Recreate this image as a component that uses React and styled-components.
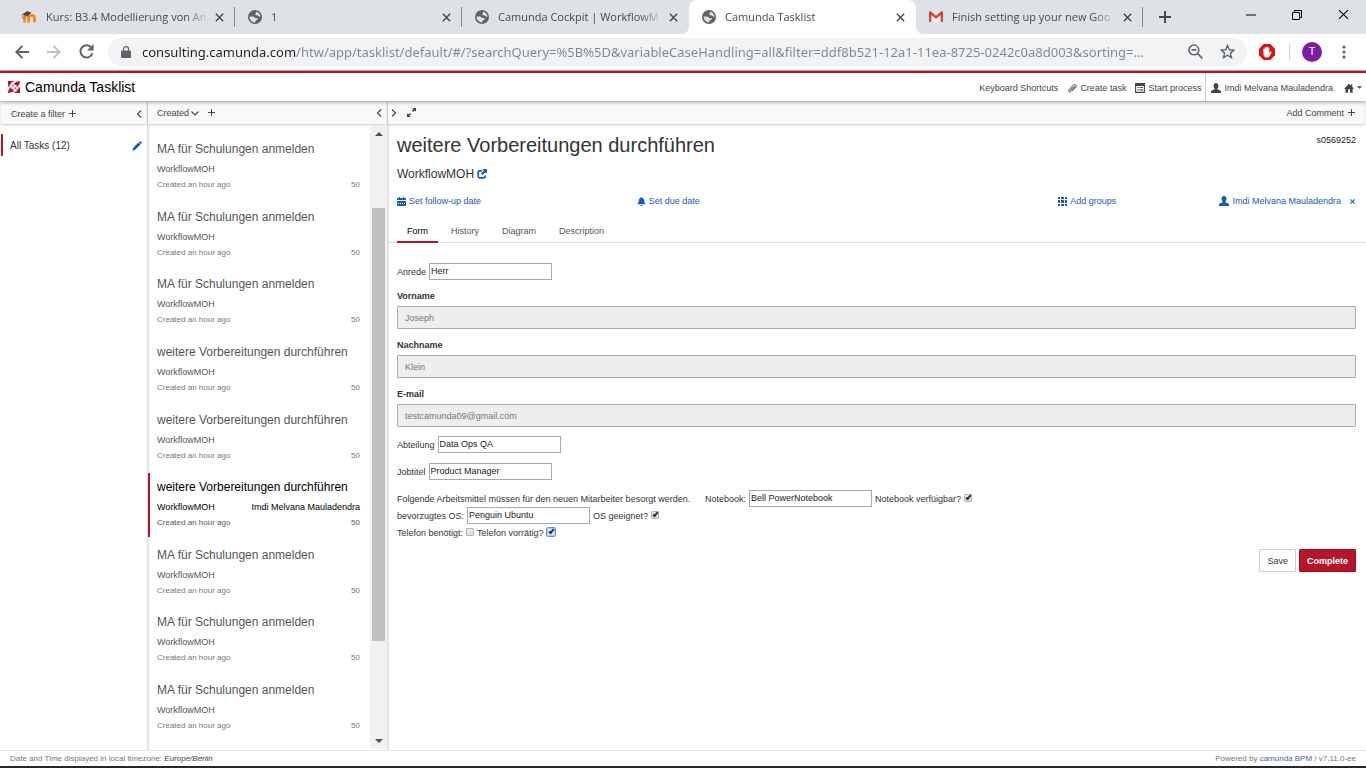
import React from "react";
import styled, { createGlobalStyle, css } from "styled-components";

const RED = "#b5152b";
const BLUE = "#155cb5";

const GlobalStyle = createGlobalStyle`
  *, *::before, *::after { box-sizing: border-box; }
  html, body, #root { height: 100%; }
  body {
    margin: 0;
    background: #fff;
    color: #333;
    font-family: "Liberation Sans", Arial, sans-serif;
    font-size: 9px;
    line-height: 14px;
  }
  h1, h2, h3, p, ul { margin: 0; padding: 0; font-weight: 400; }
  ul { list-style: none; }
  a { color: inherit; text-decoration: none; }
  button, input { font: inherit; color: inherit; }
  button { margin: 0; padding: 0; border: 0; background: none; cursor: pointer; }
`;

const Page = styled.div`
  display: flex;
  flex-direction: column;
  height: 100vh;
  overflow: hidden;
  border-bottom: 2px solid #27272b;
`;

const Svg = styled.svg`
  display: block;
  flex: none;
  fill: currentColor;
`;

const StrokeSvg = styled(Svg)`
  fill: none;
  stroke: currentColor;
  stroke-width: ${(p) => p.$stroke};
`;

/* ---------- browser frame ---------- */

const TabStrip = styled.div`
  display: flex;
  flex: none;
  height: 34px;
  padding-left: 8px;
  background: #dee1e6;
  color: #45494d;
  font-family: "Open Sans", sans-serif;
  font-size: 11px;
  line-height: 18px;
`;

const BrowserTab = styled.div`
  position: relative;
  display: flex;
  flex: 0 1 227px;
  min-width: 0;
  align-items: center;
  gap: 9px;
  padding: 0 8px 0 13px;
  ${(p) =>
    p.$active
      ? css`
          background: #fff;
          border-radius: 8px 8px 0 0;
          &::before,
          &::after {
            content: "";
            position: absolute;
            bottom: 0;
            width: 8px;
            height: 8px;
          }
          &::before {
            right: 100%;
            background: radial-gradient(circle at 0 0, transparent 8px, #fff 8px);
          }
          &::after {
            left: 100%;
            background: radial-gradient(circle at 100% 0, transparent 8px, #fff 8px);
          }
        `
      : null}
  ${(p) =>
    p.$divided
      ? css`
          &::after {
            content: "";
            position: absolute;
            right: 0;
            top: 7px;
            width: 1px;
            height: 20px;
            background: #868b90;
          }
        `
      : null}
`;

const TabTitle = styled.span`
  flex: 1;
  min-width: 0;
  margin-right: -7px;
  overflow: hidden;
  white-space: nowrap;
  mask-image: linear-gradient(to right, #000 calc(100% - 24px), transparent);
`;

const IconButton = styled.button`
  display: flex;
  flex: none;
  align-items: center;
  justify-content: center;
  width: ${(p) => p.$w || 16}px;
  height: ${(p) => p.$h || 16}px;
  &:disabled {
    color: #bdc0c4;
  }
`;

const WindowButtons = styled.div`
  display: flex;
  margin-left: auto;
  color: #000;
`;

const Toolbar = styled.div`
  display: flex;
  flex: none;
  align-items: center;
  height: 37px;
  padding: 0 12px 1px 12px;
  border-bottom: 1px solid #b5b6b8;
  color: #5f6368;
`;

const NavButtons = styled.div`
  display: flex;
  gap: 12px;
  margin-right: 12px;
`;

const AddressBar = styled.div`
  display: flex;
  flex: 1;
  align-items: center;
  height: 28px;
  padding: 0 8px 0 13px;
  border-radius: 14px;
  background: #f1f3f4;
`;

const AddressInput = styled.input`
  flex: 1;
  min-width: 0;
  height: 24px;
  margin: 0 2px 0 11px;
  padding: 0;
  border: 0;
  outline: 0;
  background: linear-gradient(to right, #202124 154px, #80868b 154px);
  background-clip: text;
  color: transparent;
  font-family: "Noto Sans", "Open Sans", sans-serif;
  font-size: 13px;
  text-overflow: ellipsis;
`;

const ToolbarExtras = styled.div`
  display: flex;
  align-items: center;
  margin-left: 12px;
`;

const ToolbarRule = styled.span`
  width: 1px;
  height: 16px;
  margin: 0 12px 0 14px;
  background: #cfd1d4;
`;

const Avatar = styled.button`
  width: 20px;
  height: 20px;
  margin-right: 12px;
  border-radius: 50%;
  background: #7b1fa2;
  color: #fff;
  font-family: Roboto, sans-serif;
  font-size: 11px;
`;

/* ---------- application header ---------- */

const AppHeader = styled.header`
  position: relative;
  z-index: 2;
  display: flex;
  flex: none;
  align-items: stretch;
  height: 30px;
  padding: 0 4px 0 8px;
  border-top: 2px solid ${RED};
  background: #fff;
  box-shadow: 0 1px 4px rgba(0, 0, 0, 0.4);
`;

const Brand = styled.a`
  display: flex;
  align-items: center;
  gap: 5px;
  color: #000;
  font-size: 14px;
`;

const HeaderNav = styled.nav`
  display: flex;
  gap: 9px;
  margin-left: auto;
  color: #444;
`;

const HeaderLink = styled.button`
  display: flex;
  align-items: center;
  gap: 3px;
  padding-top: 1px;
  white-space: nowrap;
`;

const HeaderUser = styled.div`
  display: flex;
  gap: 11px;
  margin-left: -5px;
  padding-left: 5px;
  border-left: 1px solid #ccc;
`;

/* ---------- columns ---------- */

const Columns = styled.main`
  display: flex;
  flex: 1;
  min-height: 0;
`;

const Column = styled.section`
  display: flex;
  flex-direction: column;
  flex: ${(p) => p.$flex};
  min-width: 0;
  ${(p) => (p.$edge ? "box-shadow: inset 4px 0 3px -3px rgba(0, 0, 0, 0.2);" : "")}
`;

const ColumnBar = styled.div`
  display: flex;
  flex: none;
  align-items: center;
  height: 23px;
  margin: 0 1px 1px;
  padding: ${(p) => p.$pad};
  background: #f9f9f9;
  color: #444;
  box-shadow: 0 1px 2px rgba(0, 0, 0, 0.22);
`;

const BarButton = styled.button`
  display: flex;
  align-items: center;
  gap: ${(p) => p.$gap || 4}px;
`;

const BarGroup = styled.div`
  display: flex;
  align-items: center;
  gap: 9px;
`;

const Spacer = styled.span`
  flex: 1;
`;

const FilterItem = styled.div`
  display: flex;
  align-items: center;
  justify-content: space-between;
  height: 22px;
  margin: 9px 5px 0 1px;
  padding: 1px 0 0 7px;
  border-left: 2px solid ${RED};
  font-size: 10px;
`;

const FilterEdit = styled(IconButton)`
  color: ${BLUE};
`;

const ListArea = styled.div`
  display: flex;
  flex: 1;
  min-height: 0;
  margin-left: 1px;
`;

const TaskList = styled.ul`
  display: flex;
  flex: 1;
  flex-direction: column;
  justify-content: space-between;
  padding: 10px 0;
`;

const TaskItem = styled.li`
  display: flex;
  flex-direction: column;
  height: 64px;
  padding: 7px 10px 8px 7px;
  border-left: 2px solid ${(p) => (p.$selected ? RED : "transparent")};
  color: ${(p) => (p.$selected ? "#000" : "#555")};
`;

const TaskTitle = styled.h3`
  font-size: 12px;
  line-height: 15px;
  margin-bottom: 5px;
  white-space: nowrap;
`;

const TaskRow = styled.div`
  display: flex;
  justify-content: space-between;
  line-height: 14px;
`;

const TaskMeta = styled(TaskRow)`
  margin-top: 2px;
  color: ${(p) => (p.$selected ? "#555" : "#777")};
  font-size: 8px;
`;

const ScrollBar = styled.div`
  display: flex;
  flex: none;
  flex-direction: column;
  width: 17px;
  margin-bottom: 1px;
  padding: 0 2px;
  background: #f1f1f1;
  color: #505050;
`;

const ScrollPart = styled.span`
  flex: ${(p) => p.$grow};
  background: ${(p) => (p.$thumb ? "#c1c1c1" : "transparent")};
`;

/* ---------- task detail ---------- */

const Detail = styled.div`
  padding: 7px 10px 0;
`;

const DetailHead = styled.div`
  display: flex;
  justify-content: space-between;
  align-items: flex-start;
  color: #333;
`;

const TenantId = styled.span`
  padding-top: 1px;
  color: #222;
`;

const DetailTitle = styled.h1`
  font-size: 20px;
  line-height: 26px;
`;

const DetailProcess = styled.h2`
  display: flex;
  align-items: center;
  gap: 3px;
  margin-top: 9px;
  font-size: 12px;
  line-height: 14px;
  a { color: ${BLUE}; }
`;

const DetailMeta = styled.div`
  display: grid;
  grid-template-columns: repeat(4, 1fr);
  margin-top: 12px;
  color: ${BLUE};
`;

const MetaCell = styled.div`
  display: flex;
  align-items: center;
  justify-content: ${(p) => (p.$end ? "flex-end" : "flex-start")};
  gap: 8px;
`;

const MetaButton = styled.button`
  display: flex;
  align-items: center;
  gap: 3px;
`;

const DetailTabs = styled.div`
  display: flex;
  gap: 3px;
  margin: 11px -10px 0;
  padding: 0 10px;
  border-bottom: 1px solid #ddd;
`;

const DetailTab = styled.button`
  height: 23px;
  margin-bottom: -1px;
  padding: 0 10px;
  border-bottom: 2px solid ${(p) => (p.$active ? RED : "transparent")};
  color: ${(p) => (p.$active ? "#000" : "#555")};
`;

const Form = styled.form`
  padding-top: 20px;
`;

const InlineRow = styled.div`
  display: flex;
  align-items: center;
  gap: 3px;
  height: 17px;
  margin-bottom: ${(p) => p.$after || 0}px;
`;

const Intro = styled.span`
  flex: 0 0 305px;
`;

const TextBox = styled.input`
  width: 123px;
  height: 17px;
  padding: 0 1px 1px;
  border: 1px solid #a9a9a9;
  border-radius: 0;
  background: #fff;
  color: #222;
`;

const Field = styled.div`
  display: flex;
  flex-direction: column;
  gap: 3px;
  margin-bottom: 9px;
  label {
    font-weight: 700;
  }
`;

const LockedBox = styled.input`
  width: 100%;
  height: 23px;
  padding: 0 7px;
  border: 1px solid #aaa;
  border-radius: 1px;
  background: #eee;
  color: #777;
`;

const Tick = styled.input`
  appearance: none;
  position: relative;
  width: 8px;
  height: 8px;
  margin: 0 0 2px;
  border: 1px solid #b4b4b4;
  border-radius: 1px;
  background: linear-gradient(#eee, #ddd);
  ${(p) => (p.$focused ? "outline: 1px solid #5a96f0; border-color: #a9c8f7; background: #dbe8fb;" : "")}
  &:checked::after {
    content: "";
    position: absolute;
    left: 2px;
    top: -1px;
    width: 3px;
    height: 6px;
    border: solid #333;
    border-width: 0 2px 2px 0;
    transform: rotate(40deg);
  }
`;

const FormButtons = styled.div`
  display: flex;
  justify-content: flex-end;
  gap: 3px;
  margin-top: 8px;
`;

const FormButton = styled.button`
  height: 23px;
  padding: 0 7px;
  border: 1px solid ${(p) => (p.$primary ? "#a01226" : "#ccc")};
  border-radius: 1px;
  background: ${(p) => (p.$primary ? RED : "#fff")};
  color: ${(p) => (p.$primary ? "#fff" : "#333")};
  font-weight: ${(p) => (p.$primary ? 700 : 400)};
`;

const Footer = styled.footer`
  display: flex;
  flex: none;
  justify-content: space-between;
  height: 16px;
  padding: 0 10px;
  border-top: 1px solid #e8e8e8;
  color: #777;
  font-size: 8px;
  line-height: 15px;
  em { color: #444; }
  a { color: #4a63ad; }
`;

/* ---------- icons ---------- */

const Icon = ({ d, size = 10, box = 16, stroke, children }) => {
  const Shape = stroke ? StrokeSvg : Svg;
  return (
    <Shape width={size} height={size} viewBox={`0 0 ${box} ${box}`} $stroke={stroke} aria-hidden="true">
      {d ? <path d={d} /> : children}
    </Shape>
  );
};

const CloseIcon = ({ size = 8, stroke = 2.6 }) => <Icon size={size} stroke={stroke} d="M1.5 1.5l13 13M14.5 1.5l-13 13" />;
const PlusIcon = ({ size = 7, stroke = 2.3 }) => <Icon size={size} stroke={stroke} d="M8 0v16M0 8h16" />;
const LeftIcon = () => <Icon size={8} stroke={2.2} d="M12 1L5 8l7 7" />;
const RightIcon = () => <Icon size={8} stroke={2.2} d="M4 1l7 7-7 7" />;
const DownIcon = () => <Icon size={8} stroke={2.2} d="M1 5l7 7 7-7" />;

const GlobeIcon = () => (
  <Icon size={14} box={14}>
    <circle cx="7" cy="7" r="7" fill="#5f6368" />
    <path
      fill="#dee1e6"
      d="M1.6 6.6h3.2c1.4 0 1.6 1.6 2.9 1.6h2.1c.3 1.5-.6 1.7-1.6 2-.8.3-.6 1.7-1.4 2.2C4 12.4 1.5 9.7 1.6 6.6zM8 1.7c2.6.4 4.4 2.5 4.4 5-.8.3-1.5-.5-2.2-1C9.6 5.2 8 5.6 7.4 4.900 6.700 4 8.600 3.300 8 1.700z"
    />
  </Icon>
);

const MoodleIcon = () => (
  <Svg width="16" height="14" viewBox="0 0 16 14" aria-hidden="true">
    <path d="M3.5 12.5V7.600c0-3 4.200-3 4.200 0v4.900M7.700 7.600c0-3 5.800-3 5.800 0v4.900" fill="none" stroke="#f98012" strokeWidth="2.6" />
    <path d="M1 4.500L6 1.200l4.500 1.300L6.500 6 1 4.500z" fill="#444" />
    <path d="M1.600 4.600v4" stroke="#777" strokeWidth=".8" />
  </Svg>
);

const GmailIcon = () => (
  <Svg width="14" height="12" viewBox="0 0 14 12" aria-hidden="true">
    <path d="M1 .5h12V11H1z" fill="#f3efee" />
    <path d="M0 1.500C0 .4 1.300 0 2 .6l5 4.200 5-4.200c.7-.6 2-.2 2 .9V11h-2.300V4L7 7.800 2.300 4v7H0z" fill="#d54336" />
  </Svg>
);

const LogoIcon = () => (
  <Svg width="12" height="12" viewBox="0 0 12 12" aria-hidden="true">
    <path
      d="M0 0h5.500v1.500a1.500 1.500 0 1 0 0 2.300v1.700H4a1.400 1.400 0 1 0-2 0H0zM6.500 6.500H8a1.400 1.400 0 1 0 2 0h2V12H6.500v-1.800a1.500 1.500 0 1 0 0-2z"
      fill={RED}
    />
    <path d="M6.200 1.700h2v2h-2zM8.600 3h1.600v2.600H8.600zM1.800 6.400h1.600v2H1.800zM3.800 8.600h2v2h-2zM10.200.2H12v1.600h-1.800zM0 10.200h1.800V12H0z" fill={RED} />
    <circle cx="9.400" cy="2.500" r="2.100" fill={RED} />
    <circle cx="2.600" cy="9.500" r="2.100" fill={RED} />
  </Svg>
);

const UserIcon = () => (
  <Icon d="M8 0c2.200 0 3.800 1.700 3.800 4.200 0 1.900-.7 3.600-1.700 4.500v1.200l4.800 2.200c.7.4 1.100 1 1.100 1.800V16H0v-2.100c0-.8.4-1.400 1.100-1.800l4.800-2.200V8.700c-1-.9-1.700-2.600-1.700-4.500C4.200 1.700 5.800 0 8 0z" />
);
const ClipIcon = () => (
  <Icon
    stroke={1.4}
    d="M5.500 11.500l6-6.200c1.200-1.100 2.600.2 1.500 1.500l-6.700 6.900c-2.400 2.100-5.400-.6-3.300-3.200l6.800-7.200c3.200-2.900 6.700.7 4.100 3.700l-5.200 5.400M4.500 12.500l6.200-6.400"
  />
);
const ListIcon = () => (
  <Icon>
    <path d="M1 1h14v14H1zM1 4h14M4 7.200h2M7.500 7.200h5M4 11h2M7.500 11h5" fill="none" stroke="currentColor" strokeWidth="1.800" />
    <path d="M0 0h16v4.500H0z" />
  </Icon>
);
const HomeIcon = () => <Icon d="M8 1L0 9h2.200v6.500h4.300V10h3v5.500h4.300V9H16l-2.700-2.700V2h-2v2.300z" />;
const CaretIcon = () => <Icon size={5} d="M0 4h16l-8 8z" />;
const PencilIcon = () => <Icon d="M12.800 0l3.200 3.200-1.800 1.800L11 1.800zM10.300 2.500l3.200 3.200-8.300 8.100L.5 15.500l1.500-4.900z" />;
const ResizeIcon = () => (
  <Icon size={9} d="M9.500 0H16v6.500l-2.200-2.200-2.800 2.800-2.100-2.100 2.800-2.800zM0 16V9.500l2.200 2.200L5 8.900 7.100 11l-2.800 2.800L6.500 16z" />
);
const ExternalIcon = () => (
  <Icon>
    <path d="M8 3H4Q2 3 2 5v7q0 2 2 2h7q2 0 2-2v-1.500" fill="none" stroke="currentColor" strokeWidth="2.800" />
    <path d="M8.500 0H16v7.500l-2.400-2.400-4.600 4.600-2.700-2.700 4.600-4.600z" />
  </Icon>
);
const CalendarIcon = () => (
  <Icon size={9} box={9} d="M0 1h2V0h1v1h3V0h1v1h2v2H0zM0 4h9v5H0zM1 6v1h1V6zM3 6v1h1V6zM5 6v1h1V6zM7 6v1h1V6z" />
);
const BellIcon = () => (
  <Icon size={9} d="M8 0c1 0 1.400.7 1.400 1.600C12 2.400 13 4.500 13 7c0 3 1 4.300 3 6H0c2-1.700 3-3 3-6 0-2.500 1-4.600 3.600-5.400C6.600.7 7 0 8 0zM6 14h4c0 2.600-4 2.600-4 0z" />
);
const GridIcon = () => (
  <Icon size={9} box={9} d="M0 0h2v2H0zM3 0h3v2H3zM7 0h2v2H7zM0 3h2v3H0zM3 3h3v3H3zM7 3h2v3H7zM0 7h2v2H0zM3 7h3v2H3zM7 7h2v2H7z" />
);

/* ---------- data ---------- */

const browserTabs = [
  { title: "Kurs: B3.4 Modellierung von An", icon: <MoodleIcon />, divided: true },
  { title: "1", icon: <GlobeIcon />, divided: true },
  { title: "Camunda Cockpit | WorkflowM", icon: <GlobeIcon /> },
  { title: "Camunda Tasklist", icon: <GlobeIcon />, active: true },
  { title: "Finish setting up your new Goo", icon: <GmailIcon />, divided: true },
];

const MA = "MA für Schulungen anmelden";
const WV = "weitere Vorbereitungen durchführen";
const tasks = [MA, MA, MA, WV, WV, WV, MA, MA, MA].map((title, i) => ({ title, selected: i === 5 }));

const locked = [
  { id: "vorname", label: "Vorname", value: "Joseph" },
  { id: "nachname", label: "Nachname", value: "Klein" },
  { id: "email", label: "E-mail", value: "testcamunda09@gmail.com" },
];

const URL_TEXT =
  "consulting.camunda.com/htw/app/tasklist/default/#/?searchQuery=%5B%5D&variableCaseHandling=all&filter=ddf8b521-12a1-11ea-8725-0242c0a8d003&sorting=...";

function InlineText({ id, label, value }) {
  return (
    <>
      <label htmlFor={id}>{label}</label>
      <TextBox id={id} defaultValue={value} />
    </>
  );
}

function InlineTick({ id, label, ...rest }) {
  return (
    <>
      <label htmlFor={id}>{label}</label>
      <Tick type="checkbox" id={id} {...rest} />
    </>
  );
}

function Browser() {
  return (
    <>
      <TabStrip>
        {browserTabs.map((t) => (
          <BrowserTab key={t.title} $active={t.active} $divided={t.divided}>
            {t.icon}
            <TabTitle>{t.title}</TabTitle>
            <IconButton aria-label="Close tab"><CloseIcon size={9} /></IconButton>
          </BrowserTab>
        ))}
        <IconButton $w={44} $h={34} aria-label="New tab"><PlusIcon size={12} stroke={2.6} /></IconButton>
        <WindowButtons>
          <IconButton $w={46} $h={29} aria-label="Minimize"><Icon size={10} stroke={1.6} d="M0 8h16" /></IconButton>
          <IconButton $w={46} $h={29} aria-label="Restore">
            <Icon size={10} box={10} stroke={1} d="M.5 2.5h7v7h-7zM2.500 2.500v-2h7v7h-2" />
          </IconButton>
          <IconButton $w={46} $h={29} aria-label="Close window"><CloseIcon size={11} stroke={1.5} /></IconButton>
        </WindowButtons>
      </TabStrip>
      <Toolbar>
        <NavButtons>
          <IconButton $w={20} $h={20} aria-label="Back"><Icon size={14} stroke={2.2} d="M16 8H2M8.500 1L1.500 8l7 7" /></IconButton>
          <IconButton $w={20} $h={20} aria-label="Forward" disabled>
            <Icon size={14} stroke={2.2} d="M0 8h14M7.500 1l7 7-7 7" />
          </IconButton>
          <IconButton $w={20} $h={20} aria-label="Reload">
            <Icon size={15}>
              <path d="M13.500 4.300A6.500 6.500 0 1 0 14.300 9.800" fill="none" stroke="currentColor" strokeWidth="2.100" />
              <path d="M15.500 0v7h-7z" />
            </Icon>
          </IconButton>
        </NavButtons>
        <AddressBar>
          <Svg width="10" height="12" viewBox="0 0 10 12" aria-hidden="true">
            <path d="M1 4.500h8q1 0 1 1V11q0 1-1 1H1q-1 0-1-1V5.500q0-1 1-1z" />
            <path d="M2.500 5V3a2.500 2.300 0 0 1 5 0v2" fill="none" stroke="currentColor" strokeWidth="1.200" />
          </Svg>
          <AddressInput aria-label="Address" defaultValue={URL_TEXT} />
          <IconButton $w={40} $h={24} aria-label="Zoom">
            <Icon size={15} stroke={1.7}><circle cx="6.300" cy="6.300" r="5.200" /><path d="M10 10l5.300 5.300M3.800 6.300h5" /></Icon>
          </IconButton>
          <IconButton $w={24} $h={24} aria-label="Bookmark">
            <Icon size={15} stroke={1.5} d="M8 1.500l1.900 4.600 4.900.4-3.700 3.200 1.100 4.800L8 12l-4.200 2.500 1.100-4.800L1.200 6.500l4.900-.4z" />
          </IconButton>
        </AddressBar>
        <ToolbarExtras>
          <IconButton aria-label="Ad blocker">
            <Icon size={16}>
              <path d="M4.700 0h6.600L16 4.700v6.600L11.300 16H4.700L0 11.300V4.700z" fill="#e60f0f" />
              <path d="M4.300 8.500V5q.8-1 1.500 0V3.500q.8-1 1.500 0V3q.8-1 1.500 0v.8q.8-1 1.500 0V9l1-1.300q1-.6 1.500.3l-2 4q-.8 1.500-3 1.500-3.500 0-3.500-5z" fill="#fff" />
            </Icon>
          </IconButton>
          <ToolbarRule />
          <Avatar>T</Avatar>
          <IconButton aria-label="Menu" $w={20}>
            <Icon size={14} box={14}><circle cx="7" cy="2" r="1.600" /><circle cx="7" cy="7" r="1.600" /><circle cx="7" cy="12" r="1.600" /></Icon>
          </IconButton>
        </ToolbarExtras>
      </Toolbar>
    </>
  );
}

function TaskDetail() {
  return (
    <Detail>
      <DetailHead>
        <DetailTitle>{WV}</DetailTitle>
        <TenantId>s0569252</TenantId>
      </DetailHead>
      <DetailProcess>
        WorkflowMOH <a href="#process" aria-label="Open process"><ExternalIcon /></a>
      </DetailProcess>
      <DetailMeta>
        <MetaCell><MetaButton><CalendarIcon />Set follow-up date</MetaButton></MetaCell>
        <MetaCell><MetaButton><BellIcon />Set due date</MetaButton></MetaCell>
        <MetaCell $end><MetaButton><GridIcon />Add groups</MetaButton></MetaCell>
        <MetaCell $end>
          <MetaButton><UserIcon />Imdi Melvana Mauladendra</MetaButton>
          <IconButton $w={7} aria-label="Unclaim"><CloseIcon size={5} stroke={3.5} /></IconButton>
        </MetaCell>
      </DetailMeta>
      <DetailTabs role="tablist">
        {["Form", "History", "Diagram", "Description"].map((t, i) => (
          <DetailTab key={t} role="tab" $active={i === 0}>{t}</DetailTab>
        ))}
      </DetailTabs>
      <Form onSubmit={(e) => e.preventDefault()}>
        <InlineRow $after={9}><InlineText id="anrede" label="Anrede" value="Herr" /></InlineRow>
        {locked.map((f) => (
          <Field key={f.id}>
            <label htmlFor={f.id}>{f.label}</label>
            <LockedBox id={f.id} defaultValue={f.value} disabled />
          </Field>
        ))}
        <InlineRow $after={10}><InlineText id="abteilung" label="Abteilung" value="Data Ops QA" /></InlineRow>
        <InlineRow $after={10}><InlineText id="jobtitel" label="Jobtitel" value="Product Manager" /></InlineRow>
        <InlineRow>
          <Intro>Folgende Arbeitsmittel müssen für den neuen Mitarbeiter besorgt werden.</Intro>
          <InlineText id="notebook" label="Notebook:" value="Bell PowerNotebook" />
          <InlineTick id="nb-ok" label="Notebook verfüigbar?" defaultChecked />
        </InlineRow>
        <InlineRow>
          <InlineText id="os" label="bevorzugtes OS:" value="Penguin Ubuntu" />
          <InlineTick id="os-ok" label="OS geeignet?" defaultChecked />
        </InlineRow>
        <InlineRow>
          <InlineTick id="tel" label="Telefon benötigt:" />
          <InlineTick id="tel-ok" label="Telefon vorrätig?" defaultChecked $focused />
        </InlineRow>
        <FormButtons>
          <FormButton type="button">Save</FormButton>
          <FormButton type="submit" $primary>Complete</FormButton>
        </FormButtons>
      </Form>
    </Detail>
  );
}

export default function App() {
  return (
    <Page>
      <GlobalStyle />
      <Browser />
      <AppHeader>
        <Brand href="#home"><LogoIcon />Camunda Tasklist</Brand>
        <HeaderNav>
          <HeaderLink>Keyboard Shortcuts</HeaderLink>
          <HeaderLink><ClipIcon />Create task</HeaderLink>
          <HeaderLink><ListIcon />Start process</HeaderLink>
          <HeaderUser>
            <HeaderLink><UserIcon />Imdi Melvana Mauladendra</HeaderLink>
            <HeaderLink aria-label="Home"><HomeIcon /><CaretIcon /></HeaderLink>
          </HeaderUser>
        </HeaderNav>
      </AppHeader>
      <Columns>
        <Column $flex="0 0 147px">
          <ColumnBar $pad="2px 3px 0 10px">
            <BarButton>Create a filter <PlusIcon /></BarButton>
            <Spacer />
            <BarButton aria-label="Collapse filters"><LeftIcon /></BarButton>
          </ColumnBar>
          <FilterItem>
            <a href="#all">All Tasks (12)</a>
            <FilterEdit $w={10} aria-label="Edit filter"><PencilIcon /></FilterEdit>
          </FilterItem>
        </Column>
        <Column $flex="0 0 240px" $edge>
          <ColumnBar $pad="0 3px 0 9px">
            <BarGroup>
              <BarButton $gap={2}>Created <DownIcon /></BarButton>
              <BarButton aria-label="Add sorting"><PlusIcon /></BarButton>
            </BarGroup>
            <Spacer />
            <BarButton aria-label="Collapse tasks"><LeftIcon /></BarButton>
          </ColumnBar>
          <ListArea>
            <TaskList>
              {tasks.map((t, i) => (
                <TaskItem key={i} $selected={t.selected}>
                  <TaskTitle>{t.title}</TaskTitle>
                  <TaskRow>
                    <span>WorkflowMOH</span>
                    {t.selected && <span>Imdi Melvana Mauladendra</span>}
                  </TaskRow>
                  <TaskMeta $selected={t.selected}>
                    <span>Created an hour ago</span>
                    <span>50</span>
                  </TaskMeta>
                </TaskItem>
              ))}
            </TaskList>
            <ScrollBar aria-hidden="true">
              <IconButton as="span" $w={13} $h={17}><Icon size={8} d="M0 12h16L8 4z" /></IconButton>
              <ScrollPart $grow={66} />
              <ScrollPart $grow={432} $thumb />
              <ScrollPart $grow={91} />
              <IconButton as="span" $w={13} $h={17}><Icon size={8} d="M0 4h16l-8 8z" /></IconButton>
            </ScrollBar>
          </ListArea>
        </Column>
        <Column $flex="1" $edge>
          <ColumnBar $pad="0 10px 0 2px">
            <BarGroup>
              <BarButton aria-label="Expand"><RightIcon /></BarButton>
              <BarButton aria-label="Full screen"><ResizeIcon /></BarButton>
            </BarGroup>
            <Spacer />
            <BarButton>Add Comment <PlusIcon /></BarButton>
          </ColumnBar>
          <TaskDetail />
        </Column>
      </Columns>
      <Footer>
        <span>Date and Time displayed in local timezone: <em>Europe/Berlin</em></span>
        <span>Powered by <a href="#camunda">camunda BPM</a> / v7.11.0-ee</span>
      </Footer>
    </Page>
  );
}
